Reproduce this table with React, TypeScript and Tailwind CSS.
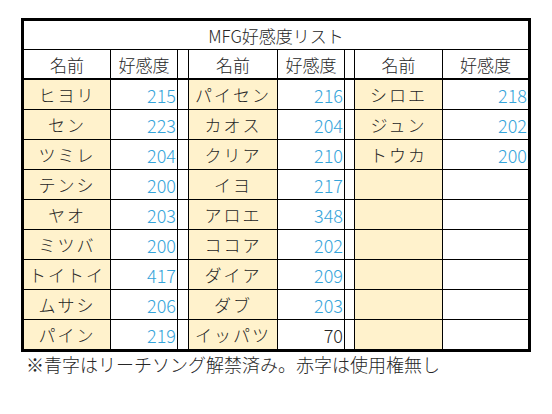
const rows: [string, number | null, string, number | null, string, number | null][] = [
  ["ヒヨリ", 215, "パイセン", 216, "シロエ", 218],
  ["セン", 223, "カオス", 204, "ジュン", 202],
  ["ツミレ", 204, "クリア", 210, "トウカ", 200],
  ["テンシ", 200, "イヨ", 217, "", null],
  ["ヤオ", 203, "アロエ", 348, "", null],
  ["ミツバ", 200, "ココア", 202, "", null],
  ["トイトイ", 417, "ダイア", 209, "", null],
  ["ムサシ", 206, "ダブ", 203, "", null],
  ["パイン", 219, "イッパツ", 70, "", null],
];

// 70 is the only value shown in black
const blackValues = new Set([70]);

function NameCell({ name }: { name: string }) {
  return (
    <div className="h-[29px] bg-[#fff2cc] flex items-center justify-center tracking-[2px]">
      {name}
    </div>
  );
}

function ValueCell({ value }: { value: number | null }) {
  return (
    <div
      className={`h-[29px] bg-white flex items-center justify-end pr-[1px] text-[18px] ${
        value !== null && blackValues.has(value) ? "text-[#262626]" : "text-[#35a4da]"
      }`}
    >
      {value ?? ""}
    </div>
  );
}

export default function App() {
  return (
    <div
      className="w-[552px] h-[414px] bg-white pl-[21px] pt-[18px] text-[#262626] text-[17px] leading-none font-light"
      style={{ fontFamily: '"Noto Sans CJK JP", "Noto Sans", sans-serif' }}
    >
      <div className="inline-grid grid-cols-[86px_66px_10px_88px_66px_9px_87px_85px] gap-px bg-black border-[3px] border-black">
        {/* Title */}
        <div className="col-span-8 h-[28px] bg-white flex items-center justify-center">
          MFG好感度リスト
        </div>

        {/* Headers */}
        {["名前", "好感度", "", "名前", "好感度", "", "名前", "好感度"].map((h, i) => (
          <div key={i} className="h-[28px] mb-px bg-white flex items-center justify-center">
            {h}
          </div>
        ))}

        {/* Data */}
        {rows.map((r, idx) => (
          <div key={idx} className="contents">
            <NameCell name={r[0]} />
            <ValueCell value={r[1]} />
            <div className="h-[29px] bg-white" />
            <NameCell name={r[2]} />
            <ValueCell value={r[3]} />
            <div className="h-[29px] bg-white" />
            <NameCell name={r[4]} />
            <ValueCell value={r[5]} />
          </div>
        ))}
      </div>

      <div className="mt-[2px] pl-[5px] text-[18px] leading-[20px]">
        ※青字はリーチソング解禁済み。赤字は使用権無し
      </div>
    </div>
  );
}
